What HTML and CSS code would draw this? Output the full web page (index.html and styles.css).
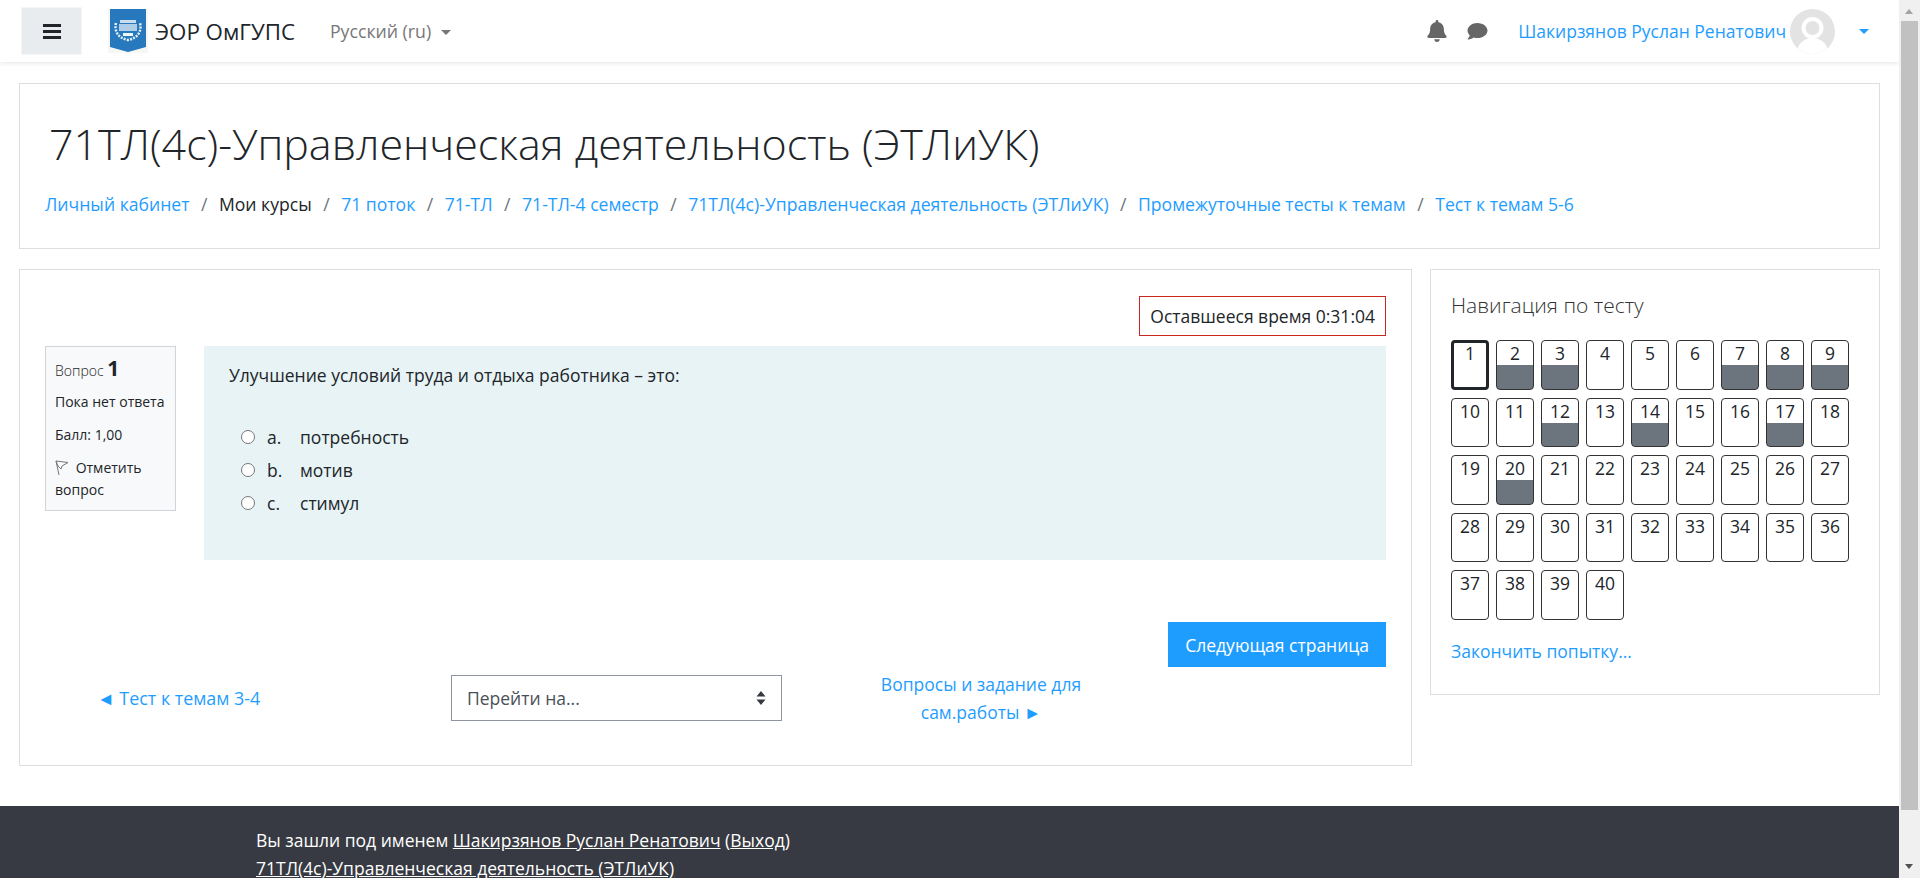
FILE: index.html
```html
<!DOCTYPE html>
<html lang="ru">
<head>
    <meta charset="UTF-8">
    <title>71ТЛ(4с)-Управленческая деятельность (ЭТЛиУК)</title>
    <link rel="stylesheet" href="styles.css">
</head>
<body>
<div class="window">
<div class="viewport">
    <header class="navbar">
        <button class="nav-toggle" aria-label="Меню">
            <svg width="18" height="15" viewBox="0 0 18 15"><path d="M0 0h18v3H0zM0 6h18v3H0zM0 12h18v3H0z" fill="#212529"/></svg>
        </button>
        <a class="brand" href="#">
            <svg class="brand-logo" width="40" height="44" viewBox="0 0 40 44">
                <rect width="40" height="44" fill="#f6f6f4"/>
                <path d="M2 0h36v38l-18 5-18-5z" fill="#2878bd"/>
                <path d="M8 14c-2 8 2 15 12 17 10-2 14-9 12-17" fill="none" stroke="#e4eff8" stroke-width="2.500" stroke-dasharray="2 1.200"/>
                <rect x="12" y="11" width="16" height="3" fill="#e4eff8" opacity=".85"/>
                <rect x="11" y="15" width="18" height="7" fill="#cfe2f2" opacity=".8"/>
                <rect x="15" y="24" width="10" height="3" fill="#eef5fb"/>
            </svg>
            <span>ЭОР ОмГУПС</span>
        </a>
        <a class="lang" href="#">Русский ‎(ru)‎<i class="caret caret-grey"></i></a>
        <div class="nav-right">
            <svg class="nav-icon" width="20" height="22" viewBox="0 0 448 512"><path fill="#666" d="M224 512c35 0 64-29 64-64H160c0 35 29 64 64 64zm215-150c-19-21-55-52-55-154 0-78-54-140-128-155V32a32 32 0 0 0-64 0v21C118 68 64 130 64 208c0 102-36 133-55 154-6 6-9 14-9 22 0 16 13 32 32 32h384c19 0 32-16 32-32 0-8-3-16-9-22z"/></svg>
            <svg class="nav-icon icon-chat" width="21" height="20" viewBox="0 0 512 512"><path fill="#666" d="M256 48C115 48 0 136 0 245c0 47 22 90 58 124-13 46-50 85-51 86-3 3-4 7-2 10 2 4 5 6 9 6 67 0 117-29 143-50 31 11 64 17 99 17 141 0 256-88 256-193S397 48 256 48z"/></svg>
            <a class="user-name" href="#">Шакирзянов Руслан Ренатович</a>
            <svg class="avatar" width="45" height="45" viewBox="0 0 45 45"><defs><clipPath id="avatar-clip"><circle cx="22.500" cy="22.500" r="22.500"/></clipPath></defs><circle cx="22.500" cy="22.500" r="22.500" fill="#e3e3e3"/><g clip-path="url(#avatar-clip)"><circle cx="22.500" cy="19" r="11" fill="#fff"/><circle cx="22.500" cy="19" r="7" fill="#e3e3e3"/><ellipse cx="22.500" cy="42" rx="15" ry="13" fill="#fff"/></g></svg>
            <i class="caret caret-blue"></i>
        </div>
    </header>

    <main class="content">
        <section class="card page-head">
            <h1>71ТЛ(4с)-Управленческая деятельность (ЭТЛиУК)</h1>
            <ol class="breadcrumb">
                <li><a href="#">Личный кабинет</a></li>
                <li>Мои курсы</li>
                <li><a href="#">71 поток</a></li>
                <li><a href="#">71-ТЛ</a></li>
                <li><a href="#">71-ТЛ-4 семестр</a></li>
                <li><a href="#">71ТЛ(4с)-Управленческая деятельность (ЭТЛиУК)</a></li>
                <li><a href="#">Промежуточные тесты к темам</a></li>
                <li><a href="#">Тест к темам 5-6</a></li>
            </ol>
        </section>

        <div class="columns">
            <section class="card quiz">
                <div class="timer-row"><div class="timer">Оставшееся время 0:31:04</div></div>
                <div class="question">
                    <aside class="q-info">
                        <div class="q-no">Вопрос <b>1</b></div>
                        <div class="q-line">Пока нет ответа</div>
                        <div class="q-line">Балл: 1,00</div>
                        <div class="q-flag">
                            <svg width="14" height="16" viewBox="0 0 14 16"><path d="M1 1l12 1.500-6 3.500-1 3-3-3zM1 1l3 14" fill="none" stroke="#777" stroke-width="1"/></svg>
                            Отметить вопрос
                        </div>
                    </aside>
                    <div class="q-body">
                        <p class="q-text">Улучшение условий труда и отдыха работника – это:</p>
                        <label class="answer"><i class="radio"></i><span class="letter">a.</span>потребность</label>
                        <label class="answer"><i class="radio"></i><span class="letter">b.</span>мотив</label>
                        <label class="answer"><i class="radio"></i><span class="letter">c.</span>стимул</label>
                    </div>
                </div>
                <div class="next-row"><button class="btn-next">Следующая страница</button></div>
                <div class="activity-nav">
                    <a class="prev" href="#">◄ Тест к темам 3-4</a>
                    <div class="jump">Перейти на...
                        <svg width="10" height="16" viewBox="0 0 10 16"><path d="M5 1l4.500 5.500h-9zM5 15L.5 9.500h9z" fill="#343a40"/></svg>
                    </div>
                    <a class="next" href="#">Вопросы и задание для сам.работы ►</a>
                </div>
            </section>

            <aside class="card side">
                <h5>Навигация по тесту</h5>
                <div class="q-grid" id="q-grid"></div>
                <a class="finish" href="#">Закончить попытку...</a>
            </aside>
        </div>
    </main>

    <footer class="footer">
        <div class="footer-in">
            <div>Вы зашли под именем <a href="#">Шакирзянов Руслан Ренатович</a> (<a href="#">Выход</a>)</div>
            <div><a href="#">71ТЛ(4с)-Управленческая деятельность (ЭТЛиУК)</a></div>
        </div>
    </footer>
</div>
<div class="scrollbar">
    <i class="arrow arrow-up"></i>
    <div class="thumb"></div>
    <i class="arrow arrow-down"></i>
</div>
</div>
<script>
    var answered = [2, 3, 7, 8, 9, 12, 14, 17, 20];
    var grid = document.getElementById('q-grid');
    for (var i = 1; i <= 40; i++) {
        var cell = document.createElement('a');
        cell.className = 'q-cell';
        if (i === 1) cell.className += ' current';
        if (answered.indexOf(i) !== -1) cell.className += ' done';
        cell.textContent = i;
        grid.appendChild(cell);
    }
</script>
</body>
</html>
```

FILE: styles.css
```css
* {
    box-sizing: border-box;
}
body {
    margin: 0;
    font-family: "Open Sans", "Noto Sans", sans-serif;
    font-size: 17.5px;
    color: #212529;
    background: #fff;
    overflow: hidden;
}
a {
    color: #1f9dff;
    text-decoration: none;
}
.window {
    display: flex;
    height: 878px;
}
.viewport {
    flex: 1;
    min-width: 0;
    overflow: hidden;
}
.scrollbar {
    width: 21px;
    background: #f0f0f0;
    padding: 21px 2px 0;
    position: relative;
}
.arrow {
    position: absolute;
    left: 6px;
    border: 4.500px solid transparent;
}
.arrow-up {
    top: 9px;
    border-top: 0;
    border-bottom: 5px solid #a3a3a3;
}
.arrow-down {
    bottom: 9px;
    border-bottom: 0;
    border-top: 5px solid #505050;
}
.thumb {
    height: 789px;
    background: #c1c1c1;
}

.navbar {
    height: 62px;
    display: flex;
    align-items: center;
    padding: 0 21px;
    background: #fff;
    box-shadow: 0 2px 4px rgba(0, 0, 0, .08);
    position: relative;
}
.nav-toggle {
    width: 61px;
    height: 48px;
    border: 1px solid #f4f6f7;
    background: #e9ecef;
    display: flex;
    align-items: center;
    justify-content: center;
    padding: 0;
}
.brand {
    display: flex;
    align-items: center;
    gap: 7px;
    margin-left: 26px;
    color: #212529;
    font-size: 22.300px;
}
.lang {
    margin-left: 35px;
    color: #777;
    font-size: 17.700px;
}
.caret {
    display: inline-block;
    border: 5px solid transparent;
    border-bottom: 0;
    vertical-align: 3px;
}
.caret-grey {
    border-top: 5px solid #777;
    margin-left: 10px;
}
.caret-blue {
    border-top: 5px solid #1f9dff;
    margin-left: 24px;
}
.nav-right {
    margin-left: auto;
    display: flex;
    align-items: center;
    margin-right: 9px;
}
.nav-icon {
    margin-right: 20px;
}
.icon-chat {
    margin-right: 30px;
}
.avatar {
    margin-left: 4px;
}

.content {
    padding: 21px 19px 0;
}
.card {
    background: #fff;
    border: 1px solid #dedede;
}
.page-head {
    height: 166px;
    padding: 36px 25px 0;
}
h1 {
    margin: 0 0 0 4px;
    font-size: 43px;
    font-weight: 300;
    line-height: 48px;
}
.breadcrumb {
    display: flex;
    list-style: none;
    margin: 24px 0 0;
    padding: 0;
    font-size: 17.600px;
}
.breadcrumb li + li::before {
    content: "/";
    color: #6c757d;
    padding: 0 11.500px;
}

.columns {
    display: flex;
    align-items: flex-start;
    gap: 18px;
    margin-top: 20px;
}
.quiz {
    width: 1393px;
    height: 497px;
    padding: 26px 25px 0;
}
.timer-row {
    display: flex;
    justify-content: flex-end;
}
.timer {
    height: 40px;
    line-height: 38px;
    padding: 0 10px;
    border: 1px solid #c9281e;
}
.question {
    display: flex;
    margin-top: 10px;
}
.q-info {
    width: 131px;
    height: 165px;
    padding: 9px 5px 9px 9px;
    margin-right: 28px;
    background: #f8f9fa;
    border: 1px solid #ced4da;
    font-size: 14px;
}
.q-no {
    line-height: 24px;
    font-weight: 300;
}
.q-no b {
    font-size: 21px;
    font-weight: 700;
}
.q-line {
    margin-top: 9px;
    line-height: 24px;
}
.q-no + .q-line {
    margin-top: 7px;
}
.q-flag {
    margin-top: 10px;
    line-height: 22px;
}
.q-flag svg {
    vertical-align: -3px;
    margin-right: 3px;
}
.q-body {
    flex: 1;
    height: 214px;
    padding: 17px 25px 0;
    background: #e7f3f5;
}
.q-text {
    margin: 0 0 33px;
    line-height: 24px;
}
.answer {
    display: flex;
    align-items: center;
    height: 33px;
    padding-left: 12px;
}
.radio {
    width: 14px;
    height: 14px;
    border: 1px solid #767676;
    border-radius: 50%;
    background: #fff;
    margin-right: 12px;
}
.letter {
    width: 33px;
}
.next-row {
    display: flex;
    justify-content: flex-end;
    margin-top: 62px;
}
.btn-next {
    height: 45px;
    padding: 0 17px;
    border: 0;
    background: #1f9dff;
    color: #fff;
    font: inherit;
}
.activity-nav {
    display: flex;
    align-items: center;
    margin-top: 3px;
}
.prev {
    margin-left: 52px;
    width: 354px;
    font-size: 17.900px;
}
.jump {
    width: 331px;
    height: 46px;
    padding: 0 15px;
    border: 1px solid #8f959e;
    display: flex;
    align-items: center;
    justify-content: space-between;
    color: #495057;
}
.next {
    width: 240px;
    margin-left: 79px;
    text-align: center;
    line-height: 28px;
}

.side {
    width: 450px;
    height: 426px;
    padding: 20px 20px 0;
}
h5 {
    margin: 0;
    font-size: 21px;
    font-weight: 300;
    line-height: 30px;
    color: #333;
}
.q-grid {
    display: grid;
    grid-template-columns: repeat(9, 38px);
    column-gap: 7px;
    row-gap: 8px;
    margin-top: 20px;
}
.q-cell {
    height: 49.600px;
    border: 1px solid #333;
    border-radius: 4px;
    color: #212529;
    text-align: center;
    line-height: 25px;
}
.q-cell.current {
    border: 3px solid #212529;
    line-height: 21px;
}
.q-cell.done {
    background: linear-gradient(#fff 24px, #6c757d 24px);
}
.finish {
    display: block;
    margin-top: 19px;
}

.footer {
    margin-top: 40px;
    height: 200px;
    background: #373a42;
    color: #fff;
}
.footer-in {
    padding: 20px 0 0 256px;
    line-height: 28px;
}
.footer a {
    color: #fff;
    text-decoration: underline;
}
```
